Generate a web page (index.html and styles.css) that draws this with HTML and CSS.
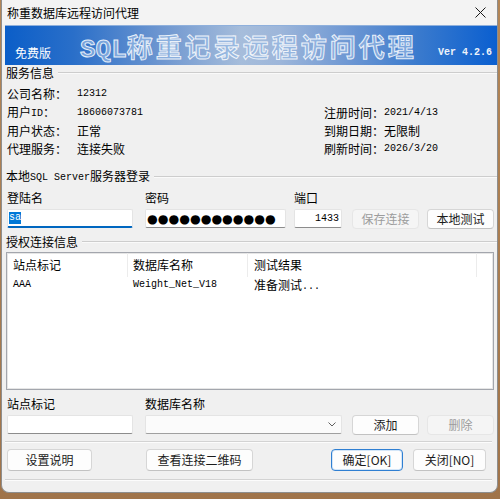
FILE: index.html
```html
<!DOCTYPE html>
<html>
<head>
<meta charset="utf-8">
<link rel="stylesheet" href="styles.css">
</head>
<body>
<div class="window">
  <div class="titlebar">
    <span class="title">称重数据库远程访问代理</span>
    <span class="close"><svg width="11" height="11" viewBox="0 0 11 11"><path d="M0.5 0.5L10.5 10.5M10.5 0.5L0.5 10.5" stroke="#1a1a1a" stroke-width="1"/></svg></span>
  </div>
  <div class="banner">
    <span class="free">免费版</span>
    <span class="big"><span class="big-sql">SQL</span>称重记录远程访问代理</span>
    <span class="ver">Ver 4.2.6</span>
  </div>

  <div class="group-head"><span>服务信息</span><i class="rule"></i></div>
  <div class="info">
    <span>公司名称：</span><span class="m">12312</span><span></span><span></span>
    <span>用户<span class="m mi">ID</span>：</span><span class="m">18606073781</span><span>注册时间：</span><span class="m">2021/4/13</span>
    <span>用户状态：</span><span>正常</span><span>到期日期：</span><span>无限制</span>
    <span>代理服务：</span><span>连接失败</span><span>刷新时间：</span><span class="m">2026/3/20</span>
  </div>

  <div class="group-head sec2"><span>本地<span class="m mi">SQL Server</span>服务器登录</span><i class="rule"></i></div>
  <div class="login">
    <span class="lbl">登陆名</span><span class="lbl">密码</span><span class="lbl">端口</span><span></span><span></span>
    <div class="field w126 focus"><span class="sel m">sa</span></div>
    <div class="field w141 pwd">●●●●●●●●●●●●</div>
    <div class="field w48 port m">1433</div>
    <button class="btn w67" disabled>保存连接</button>
    <button class="btn w67">本地测试</button>
  </div>

  <div class="group-head sec3"><span>授权连接信息</span><i class="rule"></i></div>
  <div class="list">
    <div class="lrow head">
      <span class="c1">站点标记</span><span class="c2">数据库名称</span><span class="c3">测试结果</span><span class="c4"></span>
    </div>
    <div class="lrow item">
      <span class="c1 m">AAA</span><span class="c2 m">Weight_Net_V18</span><span class="c3">准备测试<span class="m mi">...</span></span>
    </div>
  </div>

  <div class="site">
    <span class="lbl">站点标记</span><span class="lbl">数据库名称</span><span></span><span></span>
    <div class="field w126"></div>
    <div class="combo"><svg width="8" height="5" viewBox="0 0 8 5"><path d="M0.5 0.5L4 4L7.5 0.5" fill="none" stroke="#606060" stroke-width="1"/></svg></div>
    <button class="btn w67">添加</button>
    <button class="btn w67" disabled>删除</button>
  </div>

  <div class="sep s1"></div>
  <div class="actions">
    <button class="btn b-help">设置说明</button>
    <button class="btn b-qr">查看连接二维码</button>
    <button class="btn b-ok">确定[OK]</button>
    <button class="btn b-close">关闭[NO]</button>
  </div>
  <div class="sep s2"></div>
</div>
</body>
</html>
```

FILE: styles.css
```css
html, body {
  margin: 0;
  padding: 0;
}
body {
  width: 500px;
  height: 499px;
  overflow: hidden;
  background: linear-gradient(180deg, #b38657 0%, #a0744a 100%);
  font-family: "Noto Sans CJK SC", "Noto Sans", sans-serif;
  font-size: 12px;
  color: #000;
}
.m {
  font-family: "Liberation Mono", "DejaVu Sans Mono", monospace;
  font-size: 10px;
}
.mi {
  vertical-align: 1px;
}
.window {
  margin-left: 1px;
  width: 495px;
  height: 492px;
  background: #f0f0f0;
  border: 1px solid #8e8e8e;
  border-top: 0;
  border-radius: 0 0 8px 8px;
  overflow: hidden;
}
.titlebar {
  height: 25px;
  background: #f3f3f3;
  display: flex;
  align-items: center;
  padding-left: 5px;
}
.title {
  line-height: 16px;
  margin-top: 1px;
}
.close {
  margin-left: auto;
  width: 34px;
  display: flex;
  justify-content: center;
  align-items: center;
}
.close svg { display: block; }

.banner {
  height: 40px;
  margin-left: 3px;
  box-sizing: border-box;
  padding: 0 5px 0 10px;
  display: flex;
  align-items: flex-start;
  border-top: 1px solid #8fb0dc;
  background: linear-gradient(90deg, #0b5ec8 0%, #2a6fc9 14%, #6f97d0 32%, #a6bddb 48%, #9db6da 56%, #6d97d3 70%, #3a7acd 84%, #0a5fd0 100%);
}
.free {
  width: 65px;
  margin-top: 19px;
  line-height: 16px;
  color: #fff;
}
.big {
  margin-top: 5px;
  line-height: 30px;
  font-size: 26px;
  font-weight: bold;
  letter-spacing: 3px;
  color: rgba(150, 185, 228, 0.7);
  -webkit-text-stroke: 1px rgba(255, 255, 255, 0.85);
  white-space: nowrap;
}
.big-sql {
  font-family: "Liberation Mono", monospace;
  letter-spacing: 0;
}
.ver {
  margin-left: auto;
  margin-top: 20px;
  line-height: 14px;
  font-family: "Liberation Mono", monospace;
  font-size: 10px;
  font-weight: bold;
  color: #eef3fa;
}

.group-head {
  display: flex;
  align-items: center;
  height: 15px;
  padding-left: 4px;
}
.group-head > span {
  line-height: 15px;
  white-space: nowrap;
}
.rule {
  flex: 1;
  height: 0;
  border-top: 1px solid #cdcdcd;
  border-bottom: 1px solid #fafafa;
  margin-left: 4px;
}
.sec2 { margin-top: 11px; }
.sec3 { margin-top: 5px; }

.info {
  display: grid;
  grid-template-columns: 70px 247px 60px 1fr;
  grid-template-rows: 19px 19px 18px 18px;
  align-items: center;
  padding: 4px 0 0 5px;
  line-height: 16px;
  white-space: nowrap;
}

.login, .site {
  display: grid;
  row-gap: 4px;
  padding-left: 5px;
  margin-top: 7px;
}
.login {
  grid-template-columns: 138px 149px 58px 75px 67px;
}
.site {
  grid-template-columns: 138px 207px 75px 67px;
}
.lbl {
  line-height: 14px;
  height: 14px;
}
.field {
  box-sizing: border-box;
  height: 19px;
  background: #fff;
  border: 1px solid #e4e4e4;
  border-bottom-color: #8c8c8c;
  border-radius: 2px;
  padding-left: 1px;
  display: flex;
  align-items: center;
  overflow: hidden;
}
.w126 { width: 126px; }
.w141 { width: 141px; }
.w48 { width: 48px; }
.w67 { width: 67px; }
.focus {
  border-bottom: 2px solid #0067c0;
}
.sel {
  background: #0078d7;
  color: #fff;
  line-height: 12px;
  height: 12px;
  display: inline-block;
  padding: 0;
}
.pwd {
  font-family: "DejaVu Sans", sans-serif;
  font-size: 12.3px;
  letter-spacing: 0px;
  line-height: 16px;
  white-space: nowrap;
}
.port {
  justify-content: flex-end;
  padding-right: 2px;
}

.btn {
  box-sizing: border-box;
  height: 20px;
  margin: 0;
  padding: 0;
  background: #fdfdfd;
  border: 1px solid #d6d6d6;
  border-bottom-color: #c2c2c2;
  border-radius: 4px;
  font-family: "Noto Sans CJK SC", sans-serif;
  font-size: 12px;
  line-height: 16px;
  color: #1b1b1b;
  white-space: nowrap;
}
.btn:disabled {
  background: #f5f5f5;
  border-color: #e6e6e6;
  color: #9c9c9c;
}

.list {
  margin: 3px 0 0 4px;
  width: 488px;
  height: 138px;
  box-sizing: border-box;
  background: #fff;
  border: 1px solid #a3a6ad;
  box-shadow: inset 0 0 0 1px #e6e6e6;
}
.lrow {
  display: flex;
  white-space: nowrap;
}
.lrow > span {
  box-sizing: border-box;
  display: block;
}
.head {
  height: 24px;
  line-height: 24px;
}
.head > span {
  border-right: 1px solid #ececec;
}
.head .c4 { border-right: 0; }
.item {
  height: 15px;
  line-height: 15px;
}
.c1 { width: 121px; padding-left: 6px; }
.c2 { width: 120px; padding-left: 5px; }
.c3 { width: 229px; padding-left: 6px; }
.c4 { flex: 1; }

.combo {
  box-sizing: border-box;
  width: 197px;
  height: 19px;
  background: #fbfbfb;
  border: 1px solid #e4e4e4;
  border-bottom-color: #a0a0a0;
  border-radius: 2px;
  display: flex;
  justify-content: flex-end;
  align-items: center;
  padding-right: 5px;
}
.combo svg { display: block; }

.sep {
  height: 0;
  border-top: 1px solid #d3d3d3;
  border-bottom: 1px solid #fcfcfc;
  margin: 0 5px 0 3px;
}
.s1 { margin-top: 6px; }
.s2 { margin-top: 8px; }

.actions {
  display: flex;
  padding-left: 5px;
  margin-top: 6px;
}
.actions .btn { height: 22px; }
.b-help { width: 85px; }
.b-qr { width: 107px; margin-left: 54px; }
.b-ok {
  width: 72px;
  margin-left: 78px;
  border-color: #2f7fd2;
  box-shadow: inset 0 0 0 1px #d4e6f8;
}
.b-close { width: 73px; margin-left: 10px; }
```
